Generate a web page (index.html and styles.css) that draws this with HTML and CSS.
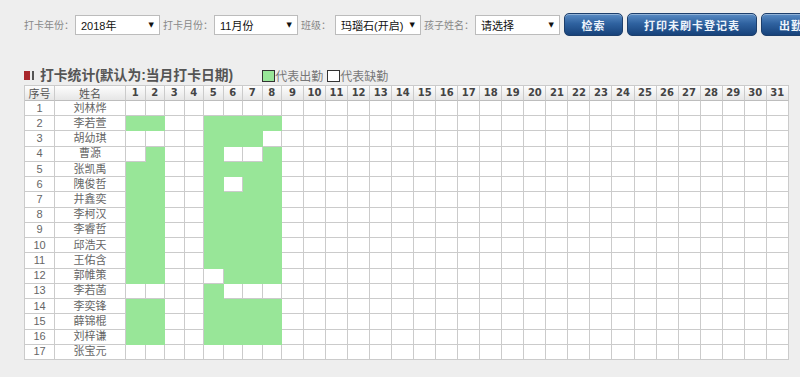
FILE: index.html
```html
<!DOCTYPE html>
<html lang="zh-CN">
<head>
<meta charset="utf-8">
<title>打卡统计</title>
<link rel="stylesheet" href="styles.css">
</head>
<body>
<div class="page">
  <div class="toolbar">
    <span class="lbl">打卡年份：</span>
    <div class="sel w85"><span>2018年</span><span class="arr">▼</span></div>
    <span class="lbl">打卡月份：</span>
    <div class="sel w84"><span>11月份</span><span class="arr">▼</span></div>
    <span class="lbl lbl-s">班级：</span>
    <div class="sel w86"><span>玛瑙石(开启)</span><span class="arr">▼</span></div>
    <span class="lbl">孩子姓名：</span>
    <div class="sel w85"><span>请选择</span><span class="arr">▼</span></div>
    <button class="btn b1">检索</button>
    <button class="btn b2">打印未刷卡登记表</button>
    <button class="btn b3">出勤统计</button>
  </div>

  <div class="head">
    <span class="mark"></span><span class="mark2"></span>
    <h2 class="title">打卡统计(默认为:当月打卡日期)</h2>
    <span class="box green"></span><span class="leg">代表出勤</span>
    <span class="box white"></span><span class="leg">代表缺勤</span>
  </div>

  <div class="sheet">
    <span class="h hl">序号</span><span class="h hl">姓名</span>
    <span class="h">1</span><span class="h">2</span><span class="h">3</span><span class="h">4</span><span class="h">5</span><span class="h">6</span><span class="h">7</span><span class="h">8</span><span class="h">9</span><span class="h">10</span><span class="h">11</span><span class="h">12</span><span class="h">13</span><span class="h">14</span><span class="h">15</span><span class="h">16</span><span class="h">17</span><span class="h">18</span><span class="h">19</span><span class="h">20</span><span class="h">21</span><span class="h">22</span><span class="h">23</span><span class="h">24</span><span class="h">25</span><span class="h">26</span><span class="h">27</span><span class="h">28</span><span class="h">29</span><span class="h">30</span><span class="h">31</span>

    <span>1</span><span>刘林烨</span>
    <span></span><span></span><span></span><span></span><span></span><span></span><span></span><span></span>
    <span></span><span></span><span></span><span></span><span></span><span></span><span></span><span></span><span></span><span></span><span></span><span></span><span></span><span></span><span></span><span></span><span></span><span></span><span></span><span></span><span></span><span></span><span></span>

    <span>2</span><span>李若萱</span>
    <span class="g"></span><span class="g"></span><span></span><span></span><span class="g"></span><span class="g"></span><span class="g"></span><span class="g"></span>
    <span></span><span></span><span></span><span></span><span></span><span></span><span></span><span></span><span></span><span></span><span></span><span></span><span></span><span></span><span></span><span></span><span></span><span></span><span></span><span></span><span></span><span></span><span></span>

    <span>3</span><span>胡幼琪</span>
    <span></span><span></span><span></span><span></span><span class="g"></span><span class="g"></span><span class="g"></span><span></span>
    <span></span><span></span><span></span><span></span><span></span><span></span><span></span><span></span><span></span><span></span><span></span><span></span><span></span><span></span><span></span><span></span><span></span><span></span><span></span><span></span><span></span><span></span><span></span>

    <span>4</span><span>曹源</span>
    <span></span><span class="g"></span><span></span><span></span><span class="g"></span><span></span><span></span><span class="g"></span>
    <span></span><span></span><span></span><span></span><span></span><span></span><span></span><span></span><span></span><span></span><span></span><span></span><span></span><span></span><span></span><span></span><span></span><span></span><span></span><span></span><span></span><span></span><span></span>

    <span>5</span><span>张凯禹</span>
    <span class="g"></span><span class="g"></span><span></span><span></span><span class="g"></span><span class="g"></span><span class="g"></span><span class="g"></span>
    <span></span><span></span><span></span><span></span><span></span><span></span><span></span><span></span><span></span><span></span><span></span><span></span><span></span><span></span><span></span><span></span><span></span><span></span><span></span><span></span><span></span><span></span><span></span>

    <span>6</span><span>隗俊哲</span>
    <span class="g"></span><span class="g"></span><span></span><span></span><span class="g"></span><span></span><span class="g"></span><span class="g"></span>
    <span></span><span></span><span></span><span></span><span></span><span></span><span></span><span></span><span></span><span></span><span></span><span></span><span></span><span></span><span></span><span></span><span></span><span></span><span></span><span></span><span></span><span></span><span></span>

    <span>7</span><span>井鑫奕</span>
    <span class="g"></span><span class="g"></span><span></span><span></span><span class="g"></span><span class="g"></span><span class="g"></span><span class="g"></span>
    <span></span><span></span><span></span><span></span><span></span><span></span><span></span><span></span><span></span><span></span><span></span><span></span><span></span><span></span><span></span><span></span><span></span><span></span><span></span><span></span><span></span><span></span><span></span>

    <span>8</span><span>李柯汉</span>
    <span class="g"></span><span class="g"></span><span></span><span></span><span class="g"></span><span class="g"></span><span class="g"></span><span class="g"></span>
    <span></span><span></span><span></span><span></span><span></span><span></span><span></span><span></span><span></span><span></span><span></span><span></span><span></span><span></span><span></span><span></span><span></span><span></span><span></span><span></span><span></span><span></span><span></span>

    <span>9</span><span>李睿哲</span>
    <span class="g"></span><span class="g"></span><span></span><span></span><span class="g"></span><span class="g"></span><span class="g"></span><span class="g"></span>
    <span></span><span></span><span></span><span></span><span></span><span></span><span></span><span></span><span></span><span></span><span></span><span></span><span></span><span></span><span></span><span></span><span></span><span></span><span></span><span></span><span></span><span></span><span></span>

    <span>10</span><span>邱浩天</span>
    <span class="g"></span><span class="g"></span><span></span><span></span><span class="g"></span><span class="g"></span><span class="g"></span><span class="g"></span>
    <span></span><span></span><span></span><span></span><span></span><span></span><span></span><span></span><span></span><span></span><span></span><span></span><span></span><span></span><span></span><span></span><span></span><span></span><span></span><span></span><span></span><span></span><span></span>

    <span>11</span><span>王佑含</span>
    <span class="g"></span><span class="g"></span><span></span><span></span><span class="g"></span><span class="g"></span><span class="g"></span><span class="g"></span>
    <span></span><span></span><span></span><span></span><span></span><span></span><span></span><span></span><span></span><span></span><span></span><span></span><span></span><span></span><span></span><span></span><span></span><span></span><span></span><span></span><span></span><span></span><span></span>

    <span>12</span><span>郭帷策</span>
    <span class="g"></span><span class="g"></span><span></span><span></span><span></span><span class="g"></span><span class="g"></span><span class="g"></span>
    <span></span><span></span><span></span><span></span><span></span><span></span><span></span><span></span><span></span><span></span><span></span><span></span><span></span><span></span><span></span><span></span><span></span><span></span><span></span><span></span><span></span><span></span><span></span>

    <span>13</span><span>李若菡</span>
    <span></span><span></span><span></span><span></span><span class="g"></span><span></span><span></span><span></span>
    <span></span><span></span><span></span><span></span><span></span><span></span><span></span><span></span><span></span><span></span><span></span><span></span><span></span><span></span><span></span><span></span><span></span><span></span><span></span><span></span><span></span><span></span><span></span>

    <span>14</span><span>李奕锋</span>
    <span class="g"></span><span class="g"></span><span></span><span></span><span class="g"></span><span class="g"></span><span class="g"></span><span class="g"></span>
    <span></span><span></span><span></span><span></span><span></span><span></span><span></span><span></span><span></span><span></span><span></span><span></span><span></span><span></span><span></span><span></span><span></span><span></span><span></span><span></span><span></span><span></span><span></span>

    <span>15</span><span>薛锦棍</span>
    <span class="g"></span><span class="g"></span><span></span><span></span><span class="g"></span><span class="g"></span><span class="g"></span><span class="g"></span>
    <span></span><span></span><span></span><span></span><span></span><span></span><span></span><span></span><span></span><span></span><span></span><span></span><span></span><span></span><span></span><span></span><span></span><span></span><span></span><span></span><span></span><span></span><span></span>

    <span>16</span><span>刘梓谦</span>
    <span class="g"></span><span class="g"></span><span></span><span></span><span class="g"></span><span class="g"></span><span class="g"></span><span class="g"></span>
    <span></span><span></span><span></span><span></span><span></span><span></span><span></span><span></span><span></span><span></span><span></span><span></span><span></span><span></span><span></span><span></span><span></span><span></span><span></span><span></span><span></span><span></span><span></span>

    <span>17</span><span>张宝元</span>
    <span></span><span></span><span></span><span></span><span></span><span></span><span></span><span></span>
    <span></span><span></span><span></span><span></span><span></span><span></span><span></span><span></span><span></span><span></span><span></span><span></span><span></span><span></span><span></span><span></span><span></span><span></span><span></span><span></span><span></span><span></span><span></span>
  </div>
</div>
</body>
</html>
```

FILE: styles.css
```css
html, body {
  margin: 0;
  padding: 0;
  background: #eeeeee;
}
body {
  font-family: "Liberation Sans", "Noto Sans CJK SC", sans-serif;
  color: #666;
}
.page {
  width: 800px;
  height: 377px;
  overflow: hidden;
  padding: 13px 0 0 24px;
  box-sizing: border-box;
  white-space: nowrap;
}
.toolbar {
  display: flex;
  align-items: center;
  height: 23px;
  width: 900px;
}
.lbl {
  font-size: 10px;
  color: #888;
  margin-right: 1px;
}
.lbl-s {
  margin-right: 4px;
}
.sel {
  height: 20px;
  box-sizing: border-box;
  border: 1px solid #bcbcbc;
  background: #fff;
  display: flex;
  align-items: center;
  justify-content: space-between;
  padding: 0 5px 0 5px;
  margin-right: 3px;
  font-size: 11px;
  color: #111;
  flex: none;
}
.w85 { width: 85px; }
.w84 { width: 84px; }
.w86 { width: 86px; }
.arr {
  font-size: 7px;
  color: #111;
  font-family: "DejaVu Sans", sans-serif;
}
.btn {
  height: 23px;
  box-sizing: border-box;
  border: 1px solid #1d3f6c;
  border-radius: 5px;
  background: linear-gradient(#5a8cc4 0%, #2f62a0 45%, #17427a 100%);
  box-shadow: inset 0 1px 0 rgba(255,255,255,0.35);
  color: #eef4fb;
  font-family: "Noto Sans CJK SC", sans-serif;
  font-size: 11px;
  font-weight: bold;
  letter-spacing: 1px;
  padding: 0;
  margin-left: 1px;
  margin-right: 3px;
  flex: none;
}
.b1 { width: 59px; }
.b2 { width: 130px; }
.b3 { width: 84px; }

.head {
  display: flex;
  align-items: center;
  height: 19px;
  margin-top: 30px;
}
.mark {
  width: 6px;
  height: 9px;
  background: #a8262b;
}
.mark2 {
  width: 2px;
  height: 9px;
  margin-left: 2px;
  background: #555;
}
.title {
  margin: 0 29px 0 6px;
  font-family: "Liberation Sans", "Noto Sans CJK SC", sans-serif;
  font-size: 13.8px;
  font-weight: bold;
  line-height: 19px;
  color: #555;
}
.box {
  width: 13px;
  height: 12px;
  box-sizing: border-box;
  border: 1px solid #333;
}
.green { background: #98e698; }
.white { background: #fff; margin-left: 4px; }
.leg {
  font-family: "Noto Sans CJK SC", sans-serif;
  font-size: 12px;
  color: #777;
  line-height: 19px;
}

.sheet {
  display: grid;
  grid-template-columns: 30px 71px repeat(8, 19.5px) repeat(23, 22.04px);
  grid-template-rows: 15px repeat(17, 15.24px);
  width: max-content;
  border-left: 1px solid #cbcbcb;
  border-top: 1px solid #cbcbcb;
  background: #fff;
}
.sheet > span {
  box-sizing: border-box;
  border-right: 1px solid #cbcbcb;
  border-bottom: 1px solid #cbcbcb;
  display: flex;
  align-items: center;
  justify-content: center;
  font-family: "Liberation Sans", "Noto Sans CJK SC", sans-serif;
  font-size: 11px;
  color: #666;
  line-height: 1;
  overflow: hidden;
}
.sheet > span.h {
  background: linear-gradient(#fdfdfd, #e6e6e6);
  font-family: "DejaVu Sans", sans-serif;
  font-size: 10px;
  font-weight: bold;
  color: #444;
  border-bottom-color: #bdbdbd;
}
.sheet > span.hl {
  font-family: "Noto Sans CJK SC", sans-serif;
  font-weight: normal;
  font-size: 11px;
  color: #555;
}
.sheet > span.g {
  background: #98e698;
  border-color: #98e698;
}
```
